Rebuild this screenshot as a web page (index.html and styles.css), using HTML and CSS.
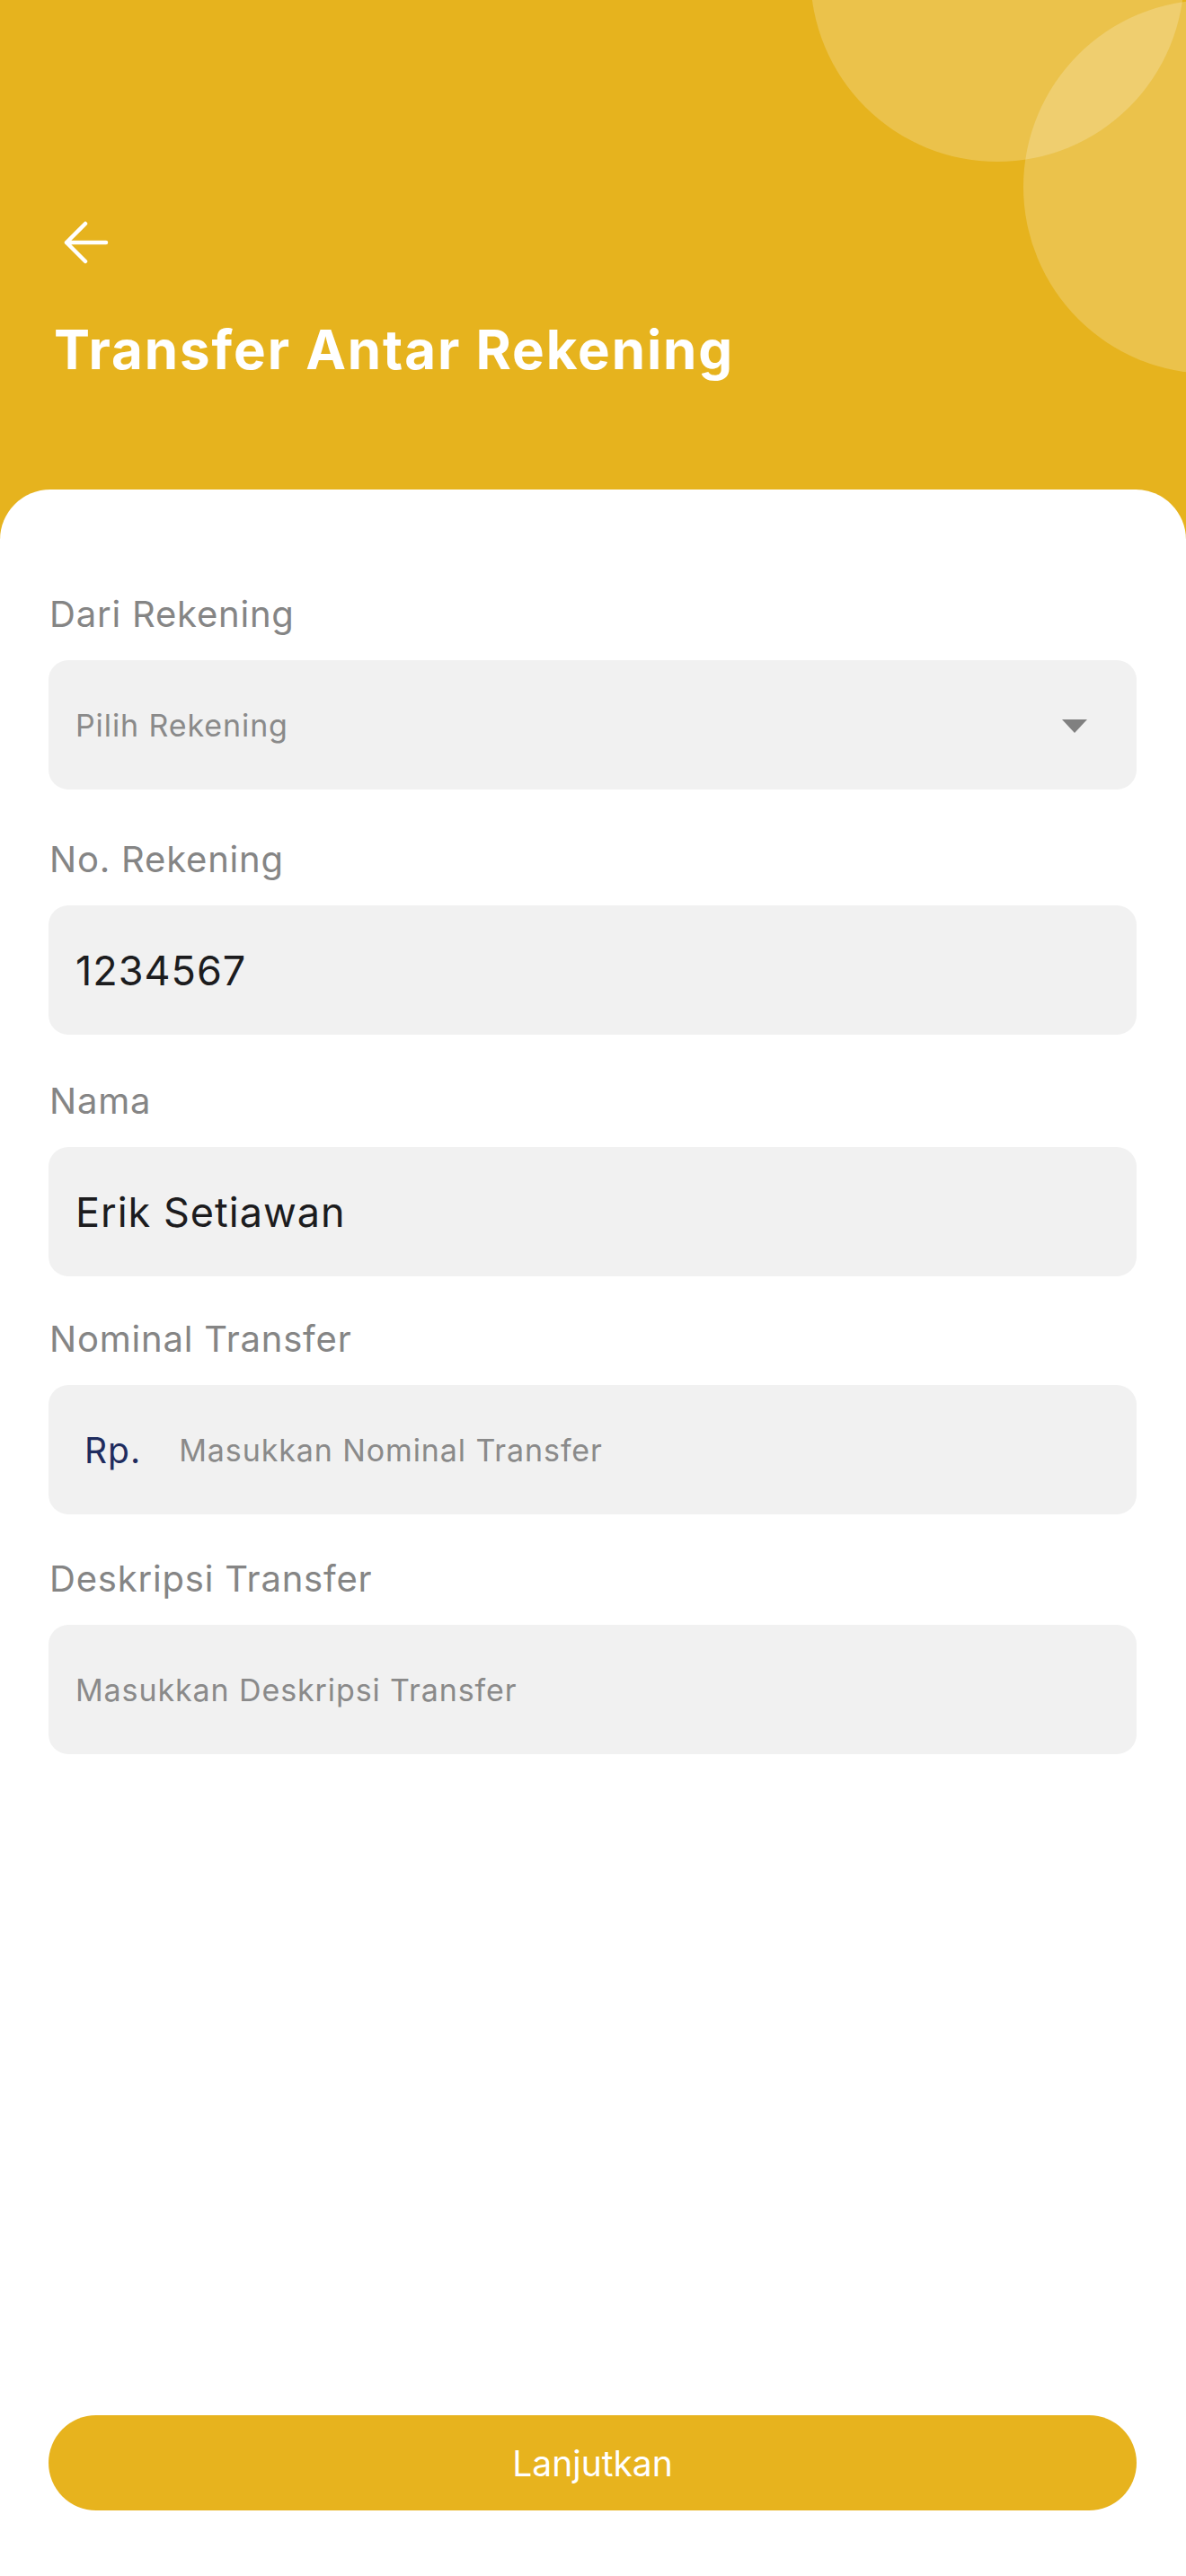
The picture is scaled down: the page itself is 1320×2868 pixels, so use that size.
FILE: index.html
```html
<!DOCTYPE html>
<html lang="id">
<head>
<meta charset="utf-8">
<title>Transfer Antar Rekening</title>
<link rel="stylesheet" href="styles.css">
</head>
<body>
<div class="screen">
  <header class="header">
    <span class="circle circle-a"></span>
    <span class="circle circle-b"></span>
    <button class="back" aria-label="Kembali">
      <svg width="52" height="52" viewBox="0 0 52 52" fill="none" stroke="#ffffff" stroke-width="4.5" stroke-linecap="round" stroke-linejoin="round"><path d="M48 26H4M25 5L4 26L25 47"/></svg>
    </button>
    <h1 class="title">Transfer Antar Rekening</h1>
  </header>

  <main class="card">
    <div class="fields">
      <div class="field">
        <div class="label">Dari Rekening</div>
        <div class="box select">
          <span class="placeholder">Pilih Rekening</span>
          <span class="caret"></span>
        </div>
      </div>
      <div class="field field-account">
        <div class="label">No. Rekening</div>
        <div class="box"><span class="value">1234567</span></div>
      </div>
      <div class="field field-name">
        <div class="label">Nama</div>
        <div class="box"><span class="value">Erik Setiawan</span></div>
      </div>
      <div class="field field-amount">
        <div class="label">Nominal Transfer</div>
        <div class="box money">
          <span class="currency">Rp.</span>
          <span class="placeholder">Masukkan Nominal Transfer</span>
        </div>
      </div>
      <div class="field field-desc">
        <div class="label">Deskripsi Transfer</div>
        <div class="box"><span class="placeholder">Masukkan Deskripsi Transfer</span></div>
      </div>
    </div>
    <button class="primary">Lanjutkan</button>
  </main>
</div>
</body>
</html>
```

FILE: styles.css
```css
* { box-sizing: border-box; }

html, body {
  margin: 0;
  padding: 0;
  background: #ffffff;
}

body {
  font-family: Inter, "Noto Sans", "Liberation Sans", sans-serif;
}

.screen {
  width: 1320px;
  height: 2868px;
  display: flex;
  flex-direction: column;
  overflow: hidden;
}

.header {
  position: relative;
  background: #e6b31e;
  height: 600px;
  flex: none;
  padding-top: 244px;
  overflow: hidden;
}

.circle {
  position: absolute;
  width: 416px;
  height: 416px;
  border-radius: 50%;
  background: rgba(255, 255, 255, 0.2);
}

.circle-a { left: 902px; top: -236px; }
.circle-b { left: 1139px; top: 0px; }

.back {
  display: block;
  margin: 0 0 0 70px;
  padding: 0;
  border: 0;
  background: none;
  width: 52px;
  height: 52px;
  position: relative;
}

.back svg { display: block; }

.title {
  position: relative;
  margin: 57px 0 0 60px;
  font-size: 60px;
  line-height: 72px;
  font-weight: 700;
  color: #ffffff;
  letter-spacing: 1.9px;
}

.card {
  position: relative;
  flex: 1;
  margin-top: -55px;
  background: #ffffff;
  border-radius: 56px 56px 0 0;
  padding: 115px 55px 73px 54px;
  display: flex;
  flex-direction: column;
}

.fields {
  display: flex;
  flex-direction: column;
}

.field {
  display: flex;
  flex-direction: column;
}

.field-account { margin-top: 54px; }
.field-name { margin-top: 50px; }
.field-amount { margin-top: 46px; }
.field-desc { margin-top: 48px; }

.label {
  font-size: 40px;
  line-height: 48px;
  letter-spacing: 0.8px;
  color: #858585;
  margin: 0 0 27px 1px;
}

.box {
  height: 144px;
  background: #f1f1f1;
  border-radius: 22px;
  display: flex;
  align-items: center;
  padding: 0 30px;
}

.placeholder {
  font-size: 34px;
  letter-spacing: 0.9px;
  color: #8a8a8a;
}

.value {
  font-size: 45px;
  letter-spacing: 1px;
  color: #1c1c1e;
}

.select {
  justify-content: space-between;
  padding-right: 55px;
}

.caret {
  width: 0;
  height: 0;
  border-left: 14.5px solid transparent;
  border-right: 14.5px solid transparent;
  border-top: 15px solid #808080;
  margin-top: 2px;
}

.money {
  padding-left: 40px;
  gap: 42px;
}

.currency {
  font-size: 39px;
  letter-spacing: 1px;
  color: #1f2c5e;
}

.primary {
  margin-top: auto;
  height: 106px;
  width: 100%;
  border: 0;
  border-radius: 53px;
  background: #e7b31e;
  color: #ffffff;
  font-family: Inter, "Noto Sans", "Liberation Sans", sans-serif;
  font-size: 39px;
  font-weight: 400;
}
```
